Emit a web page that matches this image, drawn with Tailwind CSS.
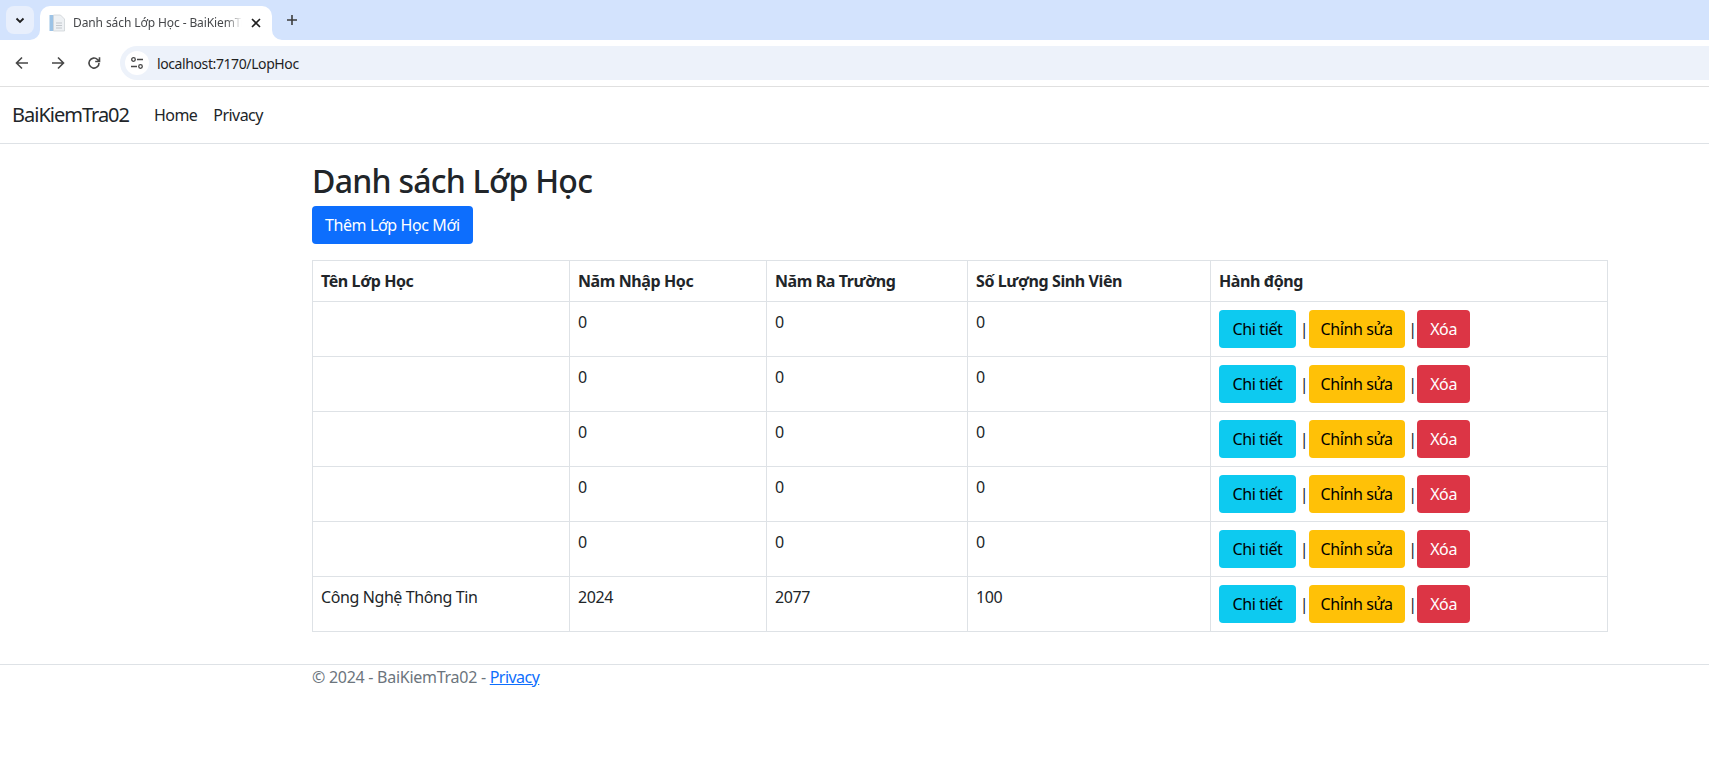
<!DOCTYPE html>
<html lang="vi">
<head>
  <meta charset="UTF-8" />
  <title>Danh sách Lớp Học - BaiKiemTra02</title>
  <script src="https://cdn.jsdelivr.net/npm/@tailwindcss/browser@4"></script>
</head>
<body class="bg-white text-[#212529] font-['Noto_Sans','Open_Sans',sans-serif] text-[16px] tracking-[-0.4px] overflow-hidden h-[783px]">

  <!-- Browser tab strip -->
  <div class="h-[40px] bg-[#d3e3fd] flex items-end pl-[6px] tracking-normal">
    <div class="w-[28px] h-[28px] mb-[6px] rounded-[8px] bg-[#e8effc] flex items-center justify-center">
      <svg width="12" height="12" viewBox="0 0 12 12" fill="none" stroke="#1f1f1f" stroke-width="1.8"><path d="M2.5 4.5 6 8l3.5-3.5"/></svg>
    </div>
    <div class="relative ml-[6px] w-[232px] h-[34px] bg-white rounded-t-[10px] flex items-center pl-[9px] pr-[9px]">
      <svg width="10" height="10" viewBox="0 0 10 10" class="absolute left-[-10px] bottom-0"><path d="M10 0v10H0a10 10 0 0 0 10-10z" fill="#fff"/></svg>
      <svg width="10" height="10" viewBox="0 0 10 10" class="absolute right-[-10px] bottom-0"><path d="M0 0v10h10A10 10 0 0 1 0 0z" fill="#fff"/></svg>
      <svg width="16" height="18" viewBox="0 0 16 18" class="shrink-0">
        <rect x="0.5" y="1" width="4" height="16" fill="#9cc3e6"/>
        <path d="M4.5 1h7l4 4v12h-11z" fill="#eef1f4" stroke="#c9ced3" stroke-width="0.7"/>
        <path d="M7 9h6M7 11.5h6M7 14h6" stroke="#c2c7cc" stroke-width="1"/>
      </svg>
      <span class="ml-[8px] text-[12px] text-[#45474a] whitespace-nowrap overflow-hidden w-[169px] tracking-[-0.1px] [mask-image:linear-gradient(to_right,black_90%,transparent)]">Danh sách Lớp Học - BaiKiemTra02</span>
      <svg width="10" height="10" viewBox="0 0 10 10" stroke="#1f1f1f" stroke-width="1.6" class="ml-[9px] shrink-0"><path d="M1 1l8 8M9 1l-8 8"/></svg>
    </div>
    <div class="ml-[6px] mb-[6px] w-[28px] h-[28px] flex items-center justify-center">
      <svg width="12" height="12" viewBox="0 0 12 12" stroke="#3c3c3c" stroke-width="1.6"><path d="M6 1v10M1 6h10"/></svg>
    </div>
  </div>

  <!-- Browser toolbar -->
  <div class="h-[46px] bg-white border-b border-[#e0e0e0] box-content flex items-center rounded-tl-[8px]">
    <div class="w-[120px] flex items-center pl-[14px] gap-[20px]">
      <svg width="16" height="16" viewBox="0 0 16 16" fill="none" stroke="#474747" stroke-width="1.6" class="shrink-0"><path d="M14 8H3M8 2.5 2.5 8 8 13.5"/></svg>
      <svg width="16" height="16" viewBox="0 0 16 16" fill="none" stroke="#474747" stroke-width="1.6" class="shrink-0"><path d="M2 8h11M8 2.5 13.5 8 8 13.5"/></svg>
      <svg width="16" height="16" viewBox="0 0 16 16" fill="none" stroke="#474747" stroke-width="1.6" class="shrink-0"><path d="M13 8a5 5 0 1 1-1.5-3.5L13.5 6.5M13.5 2.2v4.3H9.2"/></svg>
    </div>
    <div class="flex-1 h-[34px] bg-[#edf2fa] rounded-l-[17px] flex items-center pl-[5px]">
      <div class="w-[24px] h-[24px] bg-white rounded-full flex items-center justify-center">
        <svg width="14" height="14" viewBox="0 0 14 14" fill="none" stroke="#474747" stroke-width="1.3"><circle cx="3.5" cy="3.5" r="1.8"/><path d="M7 3.5h6M1 10.5h6"/><circle cx="10.5" cy="10.5" r="1.8"/></svg>
      </div>
      <span class="ml-[8px] text-[14px] text-[#1f1f1f] tracking-[-0.4px]">localhost:7170/LopHoc</span>
    </div>
  </div>

  <!-- Navbar -->
  <nav class="h-[57px] border-b border-[#dee2e6] flex items-center pl-[12px]">
    <a href="#" class="text-[20px] tracking-[-1px]">BaiKiemTra02</a>
    <div class="flex ml-[25px] gap-[16px] tracking-[-0.55px]">
      <a href="#">Home</a>
      <a href="#">Privacy</a>
    </div>
  </nav>

  <!-- Main -->
  <main class="ml-[312px] w-[1296px]">
    <h1 class="text-[32px] font-medium leading-[38px] mt-[18px] mb-[6px] tracking-[-0.75px]">Danh sách Lớp Học</h1>
    <a href="#" class="inline-block h-[38px] leading-[38px] px-[13px] rounded-[4px] bg-[#0d6efd] text-white">Thêm Lớp Học Mới</a>

    <table class="mt-[16px] w-full table-fixed border-collapse">
      <thead>
        <tr class="h-[41px] text-left font-bold">
          <th class="w-[257px] border border-[#dee2e6] px-[8px]">Tên Lớp Học</th>
          <th class="w-[197px] border border-[#dee2e6] px-[8px]">Năm Nhập Học</th>
          <th class="w-[201px] border border-[#dee2e6] px-[8px]">Năm Ra Trường</th>
          <th class="w-[243px] border border-[#dee2e6] px-[8px]">Số Lượng Sinh Viên</th>
          <th class="border border-[#dee2e6] px-[8px]">Hành động</th>
        </tr>
      </thead>
      <tbody>
        <tr class="h-[55px]">
          <td class="border border-[#dee2e6] px-[8px] py-[8px] align-top"></td>
          <td class="border border-[#dee2e6] px-[8px] py-[8px] align-top">0</td>
          <td class="border border-[#dee2e6] px-[8px] py-[8px] align-top">0</td>
          <td class="border border-[#dee2e6] px-[8px] py-[8px] align-top">0</td>
          <td class="border border-[#dee2e6] px-[8px] py-[8px] align-top">
            <a href="#" class="inline-block h-[38px] leading-[38px] w-[77px] text-center rounded-[4px] bg-[#0dcaf0] text-black">Chi tiết</a> <span class="inline-block w-[5px] text-center">|</span>
            <a href="#" class="inline-block h-[38px] leading-[38px] w-[96px] text-center rounded-[4px] bg-[#ffc107] text-black">Chỉnh sửa</a> <span class="inline-block w-[5px] text-center">|</span>
            <a href="#" class="inline-block h-[38px] leading-[38px] w-[53px] text-center rounded-[4px] bg-[#dc3545] text-white">Xóa</a>
          </td>
        </tr>
        <tr class="h-[55px]">
          <td class="border border-[#dee2e6] px-[8px] py-[8px] align-top"></td>
          <td class="border border-[#dee2e6] px-[8px] py-[8px] align-top">0</td>
          <td class="border border-[#dee2e6] px-[8px] py-[8px] align-top">0</td>
          <td class="border border-[#dee2e6] px-[8px] py-[8px] align-top">0</td>
          <td class="border border-[#dee2e6] px-[8px] py-[8px] align-top">
            <a href="#" class="inline-block h-[38px] leading-[38px] w-[77px] text-center rounded-[4px] bg-[#0dcaf0] text-black">Chi tiết</a> <span class="inline-block w-[5px] text-center">|</span>
            <a href="#" class="inline-block h-[38px] leading-[38px] w-[96px] text-center rounded-[4px] bg-[#ffc107] text-black">Chỉnh sửa</a> <span class="inline-block w-[5px] text-center">|</span>
            <a href="#" class="inline-block h-[38px] leading-[38px] w-[53px] text-center rounded-[4px] bg-[#dc3545] text-white">Xóa</a>
          </td>
        </tr>
        <tr class="h-[55px]">
          <td class="border border-[#dee2e6] px-[8px] py-[8px] align-top"></td>
          <td class="border border-[#dee2e6] px-[8px] py-[8px] align-top">0</td>
          <td class="border border-[#dee2e6] px-[8px] py-[8px] align-top">0</td>
          <td class="border border-[#dee2e6] px-[8px] py-[8px] align-top">0</td>
          <td class="border border-[#dee2e6] px-[8px] py-[8px] align-top">
            <a href="#" class="inline-block h-[38px] leading-[38px] w-[77px] text-center rounded-[4px] bg-[#0dcaf0] text-black">Chi tiết</a> <span class="inline-block w-[5px] text-center">|</span>
            <a href="#" class="inline-block h-[38px] leading-[38px] w-[96px] text-center rounded-[4px] bg-[#ffc107] text-black">Chỉnh sửa</a> <span class="inline-block w-[5px] text-center">|</span>
            <a href="#" class="inline-block h-[38px] leading-[38px] w-[53px] text-center rounded-[4px] bg-[#dc3545] text-white">Xóa</a>
          </td>
        </tr>
        <tr class="h-[55px]">
          <td class="border border-[#dee2e6] px-[8px] py-[8px] align-top"></td>
          <td class="border border-[#dee2e6] px-[8px] py-[8px] align-top">0</td>
          <td class="border border-[#dee2e6] px-[8px] py-[8px] align-top">0</td>
          <td class="border border-[#dee2e6] px-[8px] py-[8px] align-top">0</td>
          <td class="border border-[#dee2e6] px-[8px] py-[8px] align-top">
            <a href="#" class="inline-block h-[38px] leading-[38px] w-[77px] text-center rounded-[4px] bg-[#0dcaf0] text-black">Chi tiết</a> <span class="inline-block w-[5px] text-center">|</span>
            <a href="#" class="inline-block h-[38px] leading-[38px] w-[96px] text-center rounded-[4px] bg-[#ffc107] text-black">Chỉnh sửa</a> <span class="inline-block w-[5px] text-center">|</span>
            <a href="#" class="inline-block h-[38px] leading-[38px] w-[53px] text-center rounded-[4px] bg-[#dc3545] text-white">Xóa</a>
          </td>
        </tr>
        <tr class="h-[55px]">
          <td class="border border-[#dee2e6] px-[8px] py-[8px] align-top"></td>
          <td class="border border-[#dee2e6] px-[8px] py-[8px] align-top">0</td>
          <td class="border border-[#dee2e6] px-[8px] py-[8px] align-top">0</td>
          <td class="border border-[#dee2e6] px-[8px] py-[8px] align-top">0</td>
          <td class="border border-[#dee2e6] px-[8px] py-[8px] align-top">
            <a href="#" class="inline-block h-[38px] leading-[38px] w-[77px] text-center rounded-[4px] bg-[#0dcaf0] text-black">Chi tiết</a> <span class="inline-block w-[5px] text-center">|</span>
            <a href="#" class="inline-block h-[38px] leading-[38px] w-[96px] text-center rounded-[4px] bg-[#ffc107] text-black">Chỉnh sửa</a> <span class="inline-block w-[5px] text-center">|</span>
            <a href="#" class="inline-block h-[38px] leading-[38px] w-[53px] text-center rounded-[4px] bg-[#dc3545] text-white">Xóa</a>
          </td>
        </tr>
        <tr class="h-[55px]">
          <td class="border border-[#dee2e6] px-[8px] py-[8px] align-top">Công Nghệ Thông Tin</td>
          <td class="border border-[#dee2e6] px-[8px] py-[8px] align-top">2024</td>
          <td class="border border-[#dee2e6] px-[8px] py-[8px] align-top">2077</td>
          <td class="border border-[#dee2e6] px-[8px] py-[8px] align-top">100</td>
          <td class="border border-[#dee2e6] px-[8px] py-[8px] align-top">
            <a href="#" class="inline-block h-[38px] leading-[38px] w-[77px] text-center rounded-[4px] bg-[#0dcaf0] text-black">Chi tiết</a> <span class="inline-block w-[5px] text-center">|</span>
            <a href="#" class="inline-block h-[38px] leading-[38px] w-[96px] text-center rounded-[4px] bg-[#ffc107] text-black">Chỉnh sửa</a> <span class="inline-block w-[5px] text-center">|</span>
            <a href="#" class="inline-block h-[38px] leading-[38px] w-[53px] text-center rounded-[4px] bg-[#dc3545] text-white">Xóa</a>
          </td>
        </tr>
      </tbody>
    </table>
  </main>

  <!-- Footer -->
  <footer class="mt-[32px] border-t border-[#dee2e6] pl-[312px] text-[#6c757d] leading-[24px] tracking-[-0.27px]">
    © 2024 - BaiKiemTra02 - <a href="#" class="text-[#0d6efd] underline tracking-[-0.55px]">Privacy</a>
  </footer>

</body>
</html>
